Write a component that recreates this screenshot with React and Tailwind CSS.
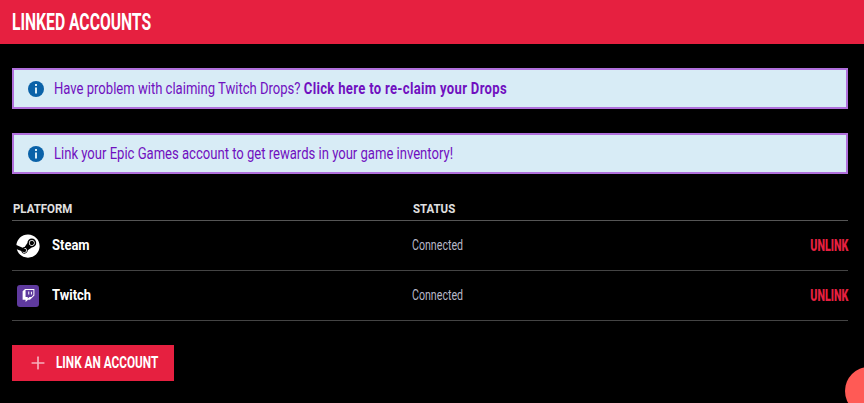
import { FaSteam, FaTwitch } from 'react-icons/fa';
import { FiPlus } from 'react-icons/fi';

const InfoIcon = () => (
    <svg width="16" height="16" viewBox="0 0 16 16" className="shrink-0">
        <circle cx="8" cy="8" r="8" fill="#0a62a8" />
        <rect x="7" y="3" width="2" height="2" fill="#d8ecf6" />
        <rect x="7" y="6.5" width="2" height="6" fill="#d8ecf6" />
    </svg>
);

const Alert = ({ children }) => (
    <div className="flex items-center gap-[10px] h-[41px] px-[14px] border-2 border-[#b070dc] bg-[#d8ecf6] text-[#7010c0] text-[16px]">
        <InfoIcon />
        <p className="whitespace-nowrap origin-left scale-x-[0.816]">{children}</p>
    </div>
);

const accounts = [
    {
        name: 'Steam',
        icon: <FaSteam size={24} className="text-white" />,
    },
    {
        name: 'Twitch',
        icon: (
            <span className="flex items-center justify-center w-[22px] h-[22px] rounded-[3px] bg-[#5f3a9e]">
                <FaTwitch size={13} className="text-white" />
            </span>
        ),
    },
];

export default function App() {
    return (
        <div className="relative h-[403px] overflow-hidden bg-black [font-family:Roboto,sans-serif]">
            <div className="flex items-center h-[44px] px-3 bg-[#e62040]">
                <h1 className="text-white text-[24px] font-bold whitespace-nowrap origin-left scale-x-[0.653]">LINKED ACCOUNTS</h1>
            </div>

            <div className="px-3 pt-6 pr-4">
                <div className="flex flex-col gap-6">
                    <Alert>
                        Have problem with claiming Twitch Drops? <b className="tracking-[0.4px]">Click here to re-claim your Drops</b>
                    </Alert>
                    <Alert>Link your Epic Games account to get rewards in your game inventory!</Alert>
                </div>

                <div className="grid grid-cols-[400px_1fr] items-center h-[47px] pt-[24px] pl-px border-b border-[#555] text-[#e0e0e0] text-[13px] font-bold">
                    <span className="origin-left scale-x-[0.88]">PLATFORM</span>
                    <span className="origin-left scale-x-[0.88]">STATUS</span>
                </div>

                {accounts.map((account) => (
                    <div key={account.name} className="grid grid-cols-[400px_1fr_auto] items-center h-[50px] border-b border-[#444]">
                        <div className="flex items-center">
                            <span className="flex items-center justify-center w-[24px] ml-[4px]">{account.icon}</span>
                            <span className="ml-3 text-white text-[15px] font-bold origin-left scale-x-[0.865]">{account.name}</span>
                        </div>
                        <span className="text-[#b8b8c8] text-[14px] origin-left scale-x-[0.76]">Connected</span>
                        <span className="text-[#e62040] text-[17px] font-black origin-right scale-x-[0.63]">UNLINK</span>
                    </div>
                ))}

                <button className="flex items-center mt-[24px] h-[36px] w-[162px] pl-[16px] bg-[#e62040] text-white text-[17px] font-bold">
                    <FiPlus size={20} className="shrink-0 text-[#f6b0bc] mr-[8px]" />
                    <span className="whitespace-nowrap origin-left scale-x-[0.693]">LINK AN ACCOUNT</span>
                </button>
            </div>

            <div className="absolute left-[845px] top-[367px] w-[48px] h-[48px] rounded-full bg-[#ff5a55]" />
        </div>
    );
}
